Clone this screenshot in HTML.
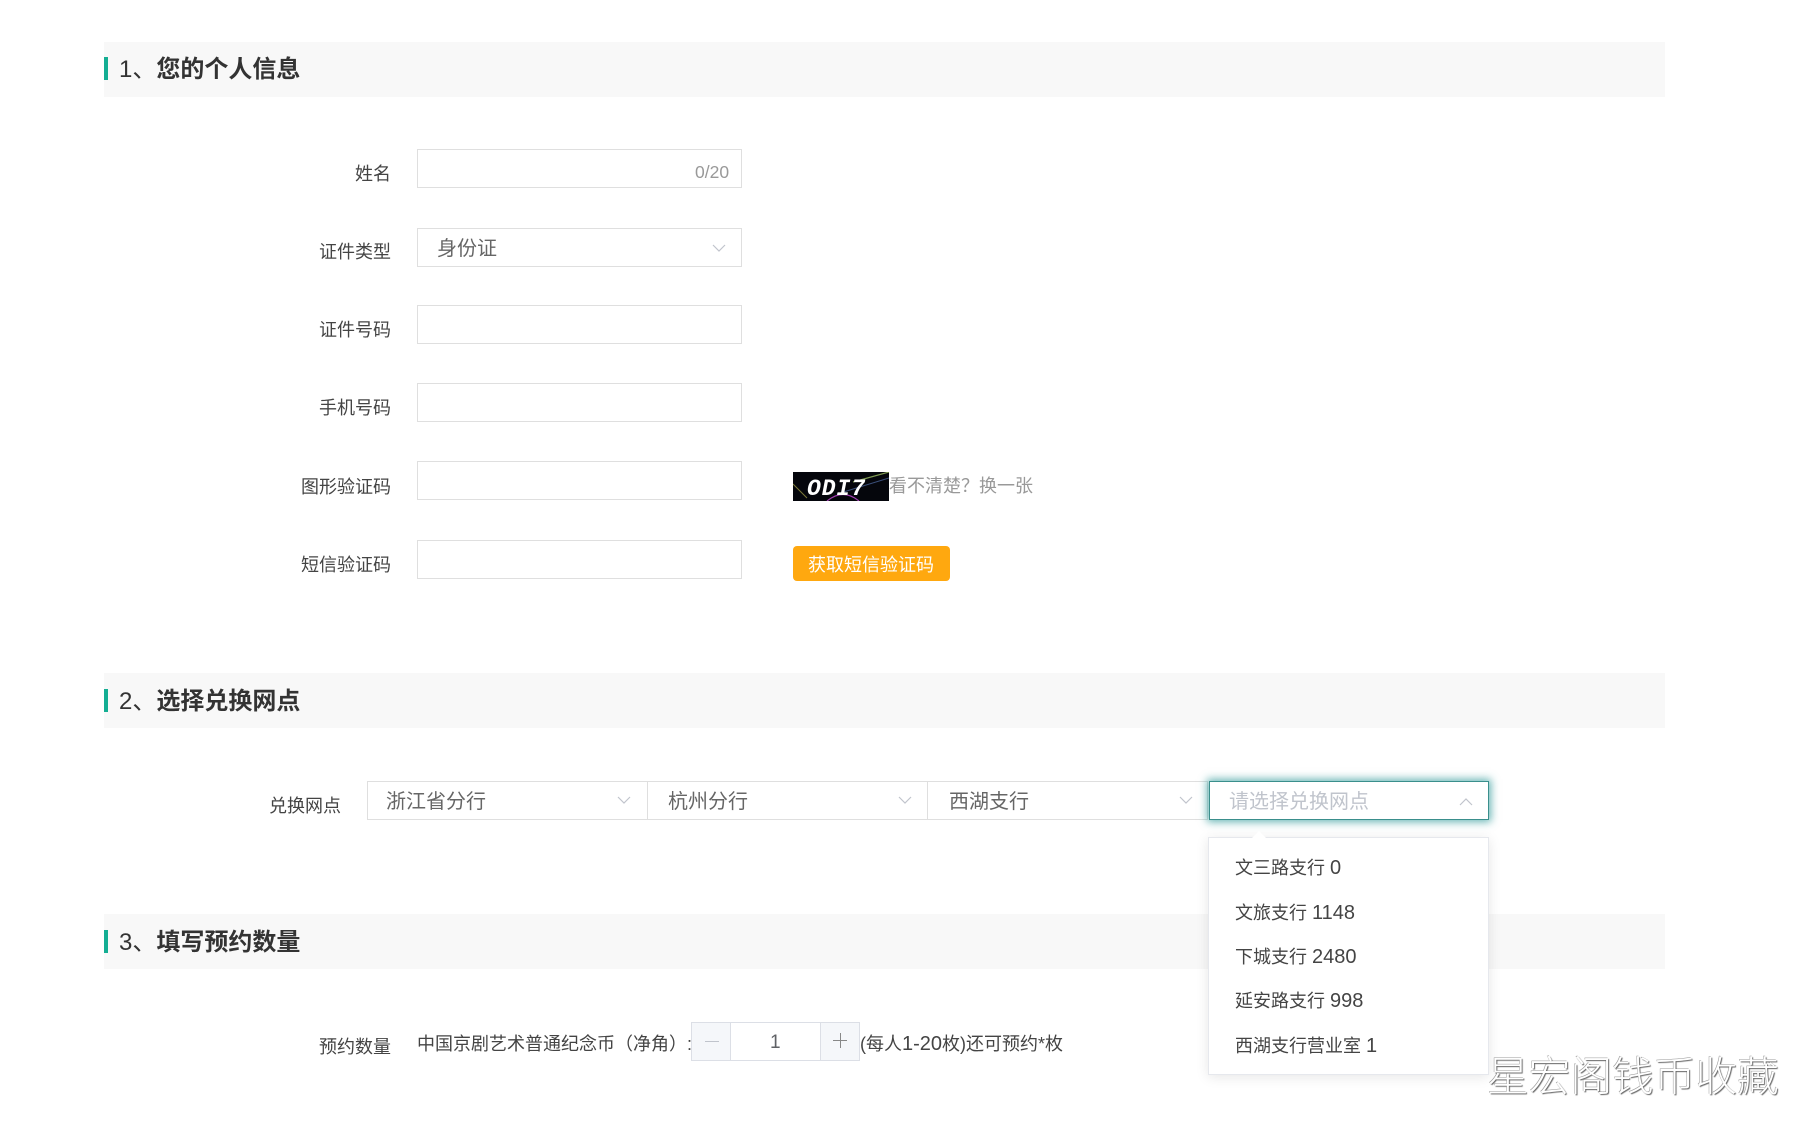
<!DOCTYPE html>
<html lang="zh-CN">
<head>
<meta charset="utf-8">
<title>预约</title>
<style>
html,body{margin:0;padding:0;background:#fff;width:1801px;height:1124px;overflow:hidden}
body{position:relative;font-family:"Liberation Sans","Noto Sans CJK SC",sans-serif;color:#444}
div,svg{position:absolute;box-sizing:border-box}
em{font-style:normal}
.hd{left:104px;width:1561px;height:55px;background:#f8f8f8}
.bar{left:104px;width:4px;height:23px;background:#14ae93}
.ti{left:119px;height:34px;line-height:34px;font-size:24px;font-weight:700;color:#333;white-space:nowrap}
.ti em{font-weight:400}
.lb{height:26px;line-height:26px;font-size:18px;color:#444;text-align:right;white-space:nowrap;right:1410px}
.ip{left:417px;width:325px;height:39px;border:1px solid #dfdfdf;background:#fff}
.sel{top:781px;height:39px;width:281px;border:1px solid #dfdfdf;background:#fff}
.st{height:30px;line-height:30px;font-size:20px;color:#666;white-space:nowrap}
.ar{width:14px;height:8px;fill:none;stroke:#c0c4cc;stroke-width:1.2}
.it{left:1235px;height:26px;line-height:26px;font-size:18px;color:#444;white-space:nowrap}
.it em{font-size:20px}
.tx{height:26px;line-height:26px;font-size:18px;color:#444;white-space:nowrap}
</style>
</head>
<body>
<div class="hd" style="top:42px"></div>
<div class="bar" style="top:57px"></div>
<div class="ti" style="top:53px"><em>1、</em>您的个人信息</div>

<div class="lb" style="top:161px">姓名</div>
<div class="ip" style="top:149px"></div>
<div class="tx" style="left:695px;top:159px;font-size:17.5px;color:#999">0/20</div>

<div class="lb" style="top:239px">证件类型</div>
<div class="ip" style="top:228px"></div>
<div class="st" style="left:437px;top:234px">身份证</div>
<svg class="ar" style="left:712px;top:244px" viewBox="0 0 14 8"><path d="M1 1L7 7L13 1"/></svg>

<div class="lb" style="top:317px">证件号码</div>
<div class="ip" style="top:305px"></div>

<div class="lb" style="top:395px">手机号码</div>
<div class="ip" style="top:383px"></div>

<div class="lb" style="top:474px">图形验证码</div>
<div class="ip" style="top:461px"></div>
<svg style="left:793px;top:472px;width:96px;height:29px" viewBox="0 0 96 29">
<rect width="96" height="29" fill="#05060c"/>
<path d="M0 12L14 26" stroke="#7c7a3a" stroke-width="1" fill="none"/>
<path d="M44 22L96 6" stroke="#3b4f7a" stroke-width="1" fill="none"/>
<path d="M60 10L96 0" stroke="#7f9a52" stroke-width="1.2" fill="none"/>
<path d="M34 29Q50 16 66 29" stroke="#a03fb0" stroke-width="1.2" fill="none"/>
<text x="14" y="23" font-family="Liberation Mono,monospace" font-size="23" font-weight="700" font-style="italic" fill="#fff" textLength="58">ODI7</text>
</svg>
<div class="tx" style="left:889px;top:473px;color:#999">看不清楚？换一张</div>

<div class="lb" style="top:552px">短信验证码</div>
<div class="ip" style="top:540px"></div>
<div style="left:793px;top:546px;width:157px;height:35px;background:#ffa80f;border-radius:4px"></div>
<div class="tx" style="left:808px;top:552px;color:#fff">获取短信验证码</div>

<div class="hd" style="top:673px"></div>
<div class="bar" style="top:689px"></div>
<div class="ti" style="top:685px"><em>2、</em>选择兑换网点</div>

<div class="lb" style="top:793px;right:1460px">兑换网点</div>
<div class="sel" style="left:367px"></div>
<div class="st" style="left:386px;top:787px">浙江省分行</div>
<svg class="ar" style="left:617px;top:796px" viewBox="0 0 14 8"><path d="M1 1L7 7L13 1"/></svg>
<div class="sel" style="left:647px"></div>
<div class="st" style="left:668px;top:787px">杭州分行</div>
<svg class="ar" style="left:898px;top:796px" viewBox="0 0 14 8"><path d="M1 1L7 7L13 1"/></svg>
<div class="sel" style="left:927px"></div>
<div class="st" style="left:949px;top:787px">西湖支行</div>
<svg class="ar" style="left:1179px;top:796px" viewBox="0 0 14 8"><path d="M1 1L7 7L13 1"/></svg>
<div class="sel" style="left:1209px;width:280px;border:1.5px solid #3a8f8c;box-shadow:0 0 8px 2px rgba(40,150,150,.7)"></div>
<div class="st" style="left:1229px;top:787px;color:#c0c4cc">请选择兑换网点</div>
<svg class="ar" style="left:1459px;top:798px" viewBox="0 0 14 8"><path d="M1 7L7 1L13 7"/></svg>

<div class="hd" style="top:914px"></div>
<div class="bar" style="top:930px"></div>
<div class="ti" style="top:926px"><em>3、</em>填写预约数量</div>

<div class="lb" style="top:1034px">预约数量</div>
<div class="tx" style="left:417px;top:1031px">中国京剧艺术普通纪念币（净角）:</div>
<div style="left:691px;top:1022px;width:169px;height:39px;border:1px solid #dcdfe6;background:#fff"></div>
<div style="left:692px;top:1023px;width:39px;height:37px;background:#f5f7fa;border-right:1px solid #dcdfe6"></div>
<div style="left:820px;top:1023px;width:39px;height:37px;background:#f5f7fa;border-left:1px solid #dcdfe6"></div>
<div style="left:705px;top:1041px;width:14px;height:1px;background:#c0c4cc"></div>
<div style="left:833px;top:1040px;width:14px;height:1px;background:#888"></div>
<div style="left:840px;top:1033px;width:1px;height:15px;background:#888"></div>
<div class="tx" style="left:770px;top:1030px;color:#606266;font-size:19px">1</div>
<div class="tx" style="left:860px;top:1031px">(每人<em style="font-size:20px">1-20</em>枚)还可预约*枚</div>

<div style="left:1208px;top:837px;width:281px;height:238px;background:#fff;border:1px solid #e6e8ed;box-shadow:0 2px 12px rgba(0,0,0,.1)"></div>
<svg style="left:1252px;top:831px;width:14px;height:7px;overflow:visible" viewBox="0 0 14 7"><path d="M0 7L7 0L14 7Z" fill="#fff"/></svg>
<div class="it" style="top:855px">文三路支行 <em>0</em></div>
<div class="it" style="top:900px">文旅支行 <em>1148</em></div>
<div class="it" style="top:944px">下城支行 <em>2480</em></div>
<div class="it" style="top:988px">延安路支行 <em>998</em></div>
<div class="it" style="top:1033px">西湖支行营业室 <em>1</em></div>

<div style="left:1487px;top:1051px;height:52px;line-height:52px;font-size:41.7px;font-weight:300;color:#fff;white-space:nowrap;text-shadow:1px 1px 1px #666,-.5px -.5px 0 #999">星宏阁钱币收藏</div>
</body>
</html>
